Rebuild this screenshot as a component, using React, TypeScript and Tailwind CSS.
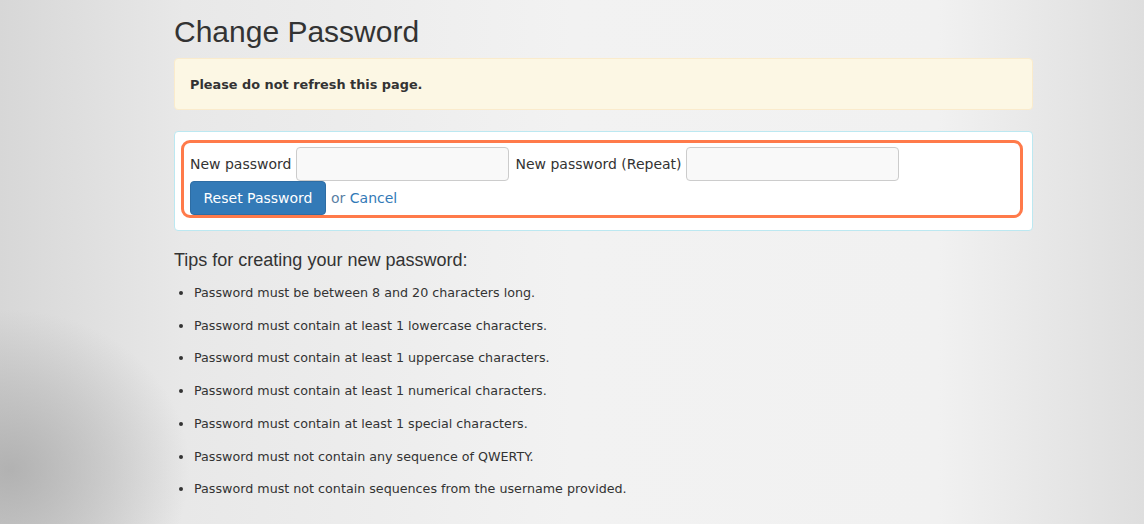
const tips = [
  "Password must be between 8 and 20 characters long.",
  "Password must contain at least 1 lowercase characters.",
  "Password must contain at least 1 uppercase characters.",
  "Password must contain at least 1 numerical characters.",
  "Password must contain at least 1 special characters.",
  "Password must not contain any sequence of QWERTY.",
  "Password must not contain sequences from the username provided.",
];

export default function App() {
  return (
    <div className="relative min-h-[524px] overflow-hidden bg-[linear-gradient(90deg,#d7d7d7_0%,#e8e8e8_16%,#f2f2f2_50%,#f1f1f1_82%,#dedede_100%)] font-['DejaVu_Sans',Verdana,sans-serif] text-[#333]">
      <div className="pointer-events-none absolute -left-[170px] top-[310px] h-[320px] w-[360px] rounded-full bg-[radial-gradient(closest-side,rgba(165,165,165,0.75),rgba(165,165,165,0.35)_55%,rgba(165,165,165,0))]" />

      <div className="relative ml-[174px] w-[859px] pt-[15px]">
        <h1 className="font-['Liberation_Sans',Arial,sans-serif] text-[30px] leading-[33px] font-normal">
          Change Password
        </h1>

        <div className="mt-[10px] rounded border border-[#faebcc] bg-[#fcf7e4] px-[15px] pt-[16px] pb-[14px] text-[12.85px] leading-[20px] font-bold">
          Please do not refresh this page.
        </div>

        <div className="mt-[21px] rounded border border-[#bce8f1] bg-white pt-[8px] pr-[9px] pb-[12px] pl-[6px]">
          <form className="rounded-[9px] border-[3px] border-[#ff7a4a] pt-[4px] pl-[6px] text-[14px]">
            <div className="flex items-center">
              <label className="mr-[5px]">New password</label>
              <input
                type="password"
                className="h-[34px] w-[213px] rounded border border-[#cccccc] bg-[#f9f9f9] px-3 outline-none"
              />
              <label className="ml-[6px] mr-[4px]">New password (Repeat)</label>
              <input
                type="password"
                className="h-[34px] w-[213px] rounded border border-[#cccccc] bg-[#f9f9f9] px-3 outline-none"
              />
            </div>
            <div className="flex items-center">
              <button
                type="button"
                className="h-[34px] w-[136px] rounded border border-[#2e6da4] bg-[#337ab7] text-white"
              >
                Reset Password
              </button>
              <span className="ml-[5px] text-[#5a7fa5]">
                or <a className="text-[#337ab7]">Cancel</a>
              </span>
            </div>
          </form>
        </div>

        <h3 className="mt-[19px] font-['Liberation_Sans',Arial,sans-serif] text-[18px] leading-[20px]">
          Tips for creating your new password:
        </h3>

        <ul className="mt-[7px] list-disc pl-[20px] text-[12.7px] leading-[32.7px]">
          {tips.map((t) => (
            <li key={t}>{t}</li>
          ))}
        </ul>
      </div>
    </div>
  );
}
